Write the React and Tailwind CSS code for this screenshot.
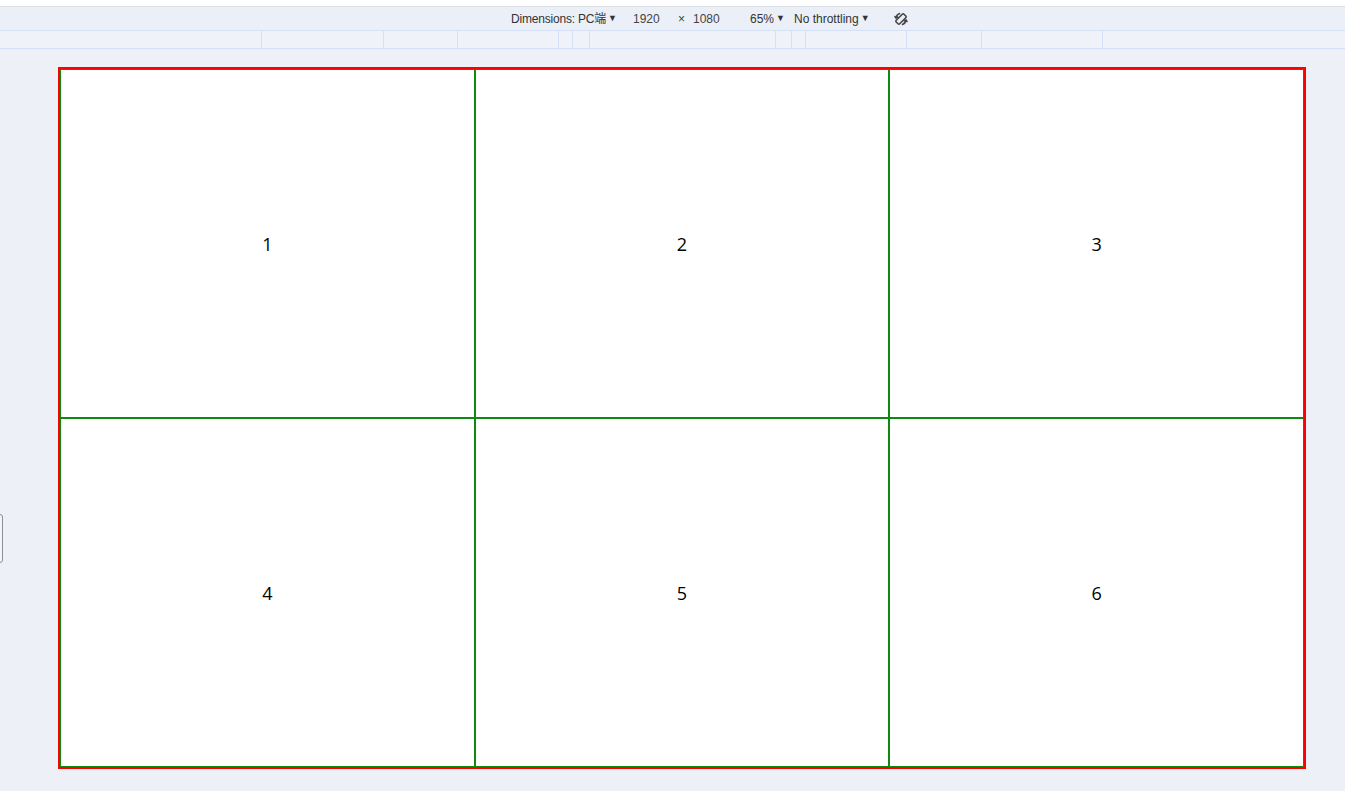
import React from "react";

// ruler segments under the toolbar (widths in px, symmetric around the center)
const rulerWidths = [262, 122, 74, 101, 14, 17, 186, 16, 14, 101, 75, 121, 242];

function RotateIcon() {
  return (
    <svg width="16" height="16" viewBox="0 0 16 16" fill="none" stroke="#444" strokeWidth="1.6">
      <g transform="rotate(45 8 8)">
        <rect x="5.5" y="2.5" width="5" height="11" rx="1.2" />
      </g>
      <path d="M3 6.5 A5.5 5.5 0 0 1 6.5 2.6" strokeLinecap="round" />
      <path d="M13 9.5 A5.5 5.5 0 0 1 9.5 13.4" strokeLinecap="round" />
      <path d="M2 5.5 L3 7 L4.5 6" strokeLinecap="round" />
      <path d="M14 10.5 L13 9 L11.5 10" strokeLinecap="round" />
    </svg>
  );
}

function Toolbar() {
  return (
    <div className="text-[12px] text-[#333] whitespace-nowrap">
      <div className="h-[7px] bg-white border-b border-[#dcdfe4]"></div>
      <div className="h-[24px] bg-[#eaeff8] border-b border-[#d3e0f5] flex items-center">
        <span className="ml-[511px] w-[122px] flex items-center tracking-[-0.2px]">
          Dimensions: PC端<span className="ml-[2px] text-[9px]">▼</span>
        </span>
        <span className="w-[45px] text-[#444]">1920</span>
        <span className="w-[15px] text-[#444]">×</span>
        <span className="w-[57px] text-[#444]">1080</span>
        <span className="w-[44px] flex items-center">
          65%<span className="ml-[2px] text-[9px]">▼</span>
        </span>
        <span className="w-[99px] flex items-center">
          No throttling<span className="ml-[2px] text-[9px]">▼</span>
        </span>
        <RotateIcon />
      </div>
      <div className="h-[18px] bg-[#eff3f9] border-b border-[#d3e0f5] flex">
        {rulerWidths.map((w, i) => (
          <div
            key={i}
            className={i < rulerWidths.length - 1 ? "h-full border-r border-[#d3e0f5]" : "h-full"}
            style={{ width: w }}
          ></div>
        ))}
      </div>
    </div>
  );
}

export default function App() {
  const cells = [1, 2, 3, 4, 5, 6];
  return (
    <div
      className="w-[1345px] h-[791px] bg-[#edf0f7] overflow-hidden relative"
      style={{ fontFamily: '"Liberation Sans", "Noto Sans CJK SC", sans-serif' }}
    >
      <Toolbar />

      {/* side resize handle */}
      <div className="absolute left-[-6px] top-[514px] w-[9px] h-[49px] rounded-[3px] border border-[#8a8f99] bg-[#f3f5f9]"></div>

      <div className="pt-[18px] pl-[58px]">
        <div className="w-[1248px] h-[702px] border-2 border-[#ff0000] bg-white grid grid-cols-3 grid-rows-2">
          {cells.map((n) => (
            <div
              key={n}
              className="border border-[#0f8a0f] flex items-center justify-center pt-[2px] text-[18px] text-black"
              style={{ fontFamily: '"Open Sans", "Liberation Sans", sans-serif' }}
            >
              {n}
            </div>
          ))}
        </div>
      </div>
    </div>
  );
}
